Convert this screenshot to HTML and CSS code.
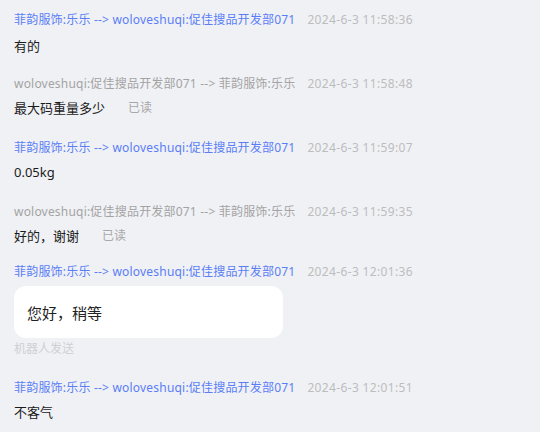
FILE: index.html
```html
<!DOCTYPE html>
<html lang="zh-CN">
<head>
<meta charset="utf-8">
<link rel="stylesheet" href="styles.css">
</head>
<body>
<div class="list">
  <div class="row row-first">
    <div class="head"><span class="who who-buyer">菲韵服饰:乐乐 --&gt; woloveshuqi:促佳搜品开发部071</span><span class="time">2024-6-3 11:58:36</span></div>
    <div class="msg">有的</div>
  </div>
  <div class="row">
    <div class="head"><span class="who who-seller">woloveshuqi:促佳搜品开发部071 --&gt; 菲韵服饰:乐乐</span><span class="time">2024-6-3 11:58:48</span></div>
    <div class="msg">最大码重量多少<span class="read">已读</span></div>
  </div>
  <div class="row">
    <div class="head"><span class="who who-buyer">菲韵服饰:乐乐 --&gt; woloveshuqi:促佳搜品开发部071</span><span class="time">2024-6-3 11:59:07</span></div>
    <div class="msg">0.05kg</div>
  </div>
  <div class="row">
    <div class="head"><span class="who who-seller">woloveshuqi:促佳搜品开发部071 --&gt; 菲韵服饰:乐乐</span><span class="time">2024-6-3 11:59:35</span></div>
    <div class="msg">好的，谢谢<span class="read">已读</span></div>
  </div>
  <div class="row row-bubble">
    <div class="head"><span class="who who-buyer">菲韵服饰:乐乐 --&gt; woloveshuqi:促佳搜品开发部071</span><span class="time">2024-6-3 12:01:36</span></div>
    <div class="bubble">您好，稍等</div>
    <div class="robot">机器人发送</div>
  </div>
  <div class="row">
    <div class="head"><span class="who who-buyer">菲韵服饰:乐乐 --&gt; woloveshuqi:促佳搜品开发部071</span><span class="time">2024-6-3 12:01:51</span></div>
    <div class="msg">不客气</div>
  </div>
</div>
</body>
</html>
```

FILE: styles.css
```css
html, body {
  margin: 0;
  padding: 0;
  background: #f0f1f5;
}
body {
  font-family: "Noto Sans", "Noto Sans CJK SC", sans-serif;
  width: 540px;
  height: 432px;
  overflow: hidden;
}
.list {
  display: flex;
  flex-direction: column;
}
.row {
  padding: 10px 14px 10px;
  display: flex;
  flex-direction: column;
  align-items: flex-start;
}
.row-first .msg {
  margin-top: 6px;
}
.row-first {
  padding-bottom: 8px;
}
.head {
  display: flex;
  font-size: 12px;
  line-height: 20px;
  white-space: nowrap;
}
.who {
  letter-spacing: 0.2px;
}
.who-buyer { color: #5a7ef6; }
.who-seller { color: #a3a3a3; }
.time {
  color: #bdbdbd;
  margin-left: 12px;
  letter-spacing: 0.35px;
}
.msg {
  margin-top: 4px;
  font-size: 13px;
  line-height: 20px;
  color: #1b1b1b;
  display: flex;
  align-items: center;
}
.read {
  margin-left: 23px;
  font-size: 12px;
  color: #a8a8a8;
}
.row-bubble {
  padding-top: 6px;
  padding-bottom: 9px;
}
.bubble {
  margin-top: 4px;
  box-sizing: border-box;
  width: 269px;
  height: 52px;
  background: #ffffff;
  border-radius: 12px;
  padding: 0 13px;
  display: flex;
  align-items: center;
  font-size: 15px;
  color: #222222;
}
.robot {
  margin-top: 1px;
  font-size: 12px;
  line-height: 20px;
  color: #cfcfd2;
}
```
